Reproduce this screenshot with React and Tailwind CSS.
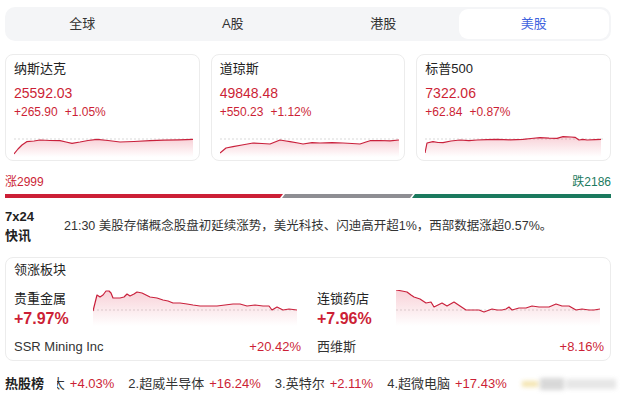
const tabs = ['全球', 'A股', '港股', '美股']

const indices = [
  {
    name: '纳斯达克',
    price: '25592.03',
    change: '+265.90',
    pct: '+1.05%',
    points: [[0, 19], [4, 14], [8, 10], [12.7, 6.7], [20, 6], [26, 5], [36, 5.5], [46, 5.7], [52, 7], [58, 8.3], [66, 7], [74, 5.5], [83, 4.3], [94, 5.5], [106, 7], [120, 6.5], [136, 5.7], [150, 5.2], [165, 4.8], [179, 4.3]],
  },
  {
    name: '道琼斯',
    price: '49848.48',
    change: '+550.23',
    pct: '+1.12%',
    points: [[0, 18], [6, 13], [13, 11.7], [22, 10], [33, 8], [42, 8.5], [50, 9], [55, 7], [60, 5], [66, 6], [70, 6.7], [78, 8], [83, 9], [92, 7.7], [100, 8], [112, 7.6], [123, 8], [132, 8.5], [140, 9], [146, 7], [150, 5.7], [160, 5.5], [170, 5.8], [179, 5]],
  },
  {
    name: '标普500',
    price: '7322.06',
    change: '+62.84',
    pct: '+0.87%',
    points: [[0, 18], [2, 8], [8, 6.7], [13, 7.5], [18, 7.7], [26, 6], [35, 5], [44, 5.6], [52, 5], [62, 4.6], [72, 4.3], [85, 4.8], [98, 4.3], [106, 3.5], [115, 2.7], [124, 3.2], [132, 3.3], [138, 1.7], [146, 2], [150, 2.3], [154, 5], [158, 4.4], [162, 5], [170, 4.6], [176, 4.3]],
  },
]

const sectors = [
  {
    name: '贵重金属',
    pct: '+7.97%',
    stock: 'SSR Mining Inc',
    stockPct: '+20.42%',
    points: [[0, 21], [4, 5], [7, 7], [10, 5], [13, 1], [16, 1], [18, 3], [20, 8], [27, 8], [31, 7], [34, 4], [37, 6], [41, 4], [44, 2], [49, 3], [57, 7], [64, 8], [70, 10], [75, 11], [80, 13], [87, 13], [94, 14], [100, 15], [107, 16], [115, 16], [124, 16], [132, 15], [140, 14], [147, 14], [154, 16], [162, 15], [170, 16], [176, 16], [179, 20], [184, 17], [190, 20], [196, 19], [204, 20]],
  },
  {
    name: '连锁药店',
    pct: '+7.96%',
    stock: '西维斯',
    stockPct: '+8.16%',
    points: [[0, 0], [6, 1], [11, 2], [15, 5], [18, 7], [24, 9], [30, 13], [35, 12], [38, 17], [42, 15], [46, 13], [51, 16], [58, 12], [64, 16], [70, 20], [76, 20], [83, 20], [88, 22], [96, 19], [101, 20], [106, 20], [110, 19], [113, 17], [116, 20], [123, 18], [130, 18], [136, 16], [143, 17], [153, 17], [160, 14], [166, 16], [173, 16], [180, 20], [186, 19], [193, 20], [198, 20], [204, 19]],
  },
]

const hotStocks = [
  { name: '2.超威半导体', pct: '+16.24%' },
  { name: '3.英特尔', pct: '+2.11%' },
  { name: '4.超微电脑', pct: '+17.43%' },
]

function Spark({ id, points, w, h, base }) {
  const line = points.map((p, i) => `${i ? 'L' : 'M'}${p[0]} ${p[1]}`).join(' ')
  const last = points[points.length - 1]
  const area = `${line} L${last[0]} ${h} L${points[0][0]} ${h} Z`
  return (
    <svg width={w} height={h} viewBox={`0 0 ${w} ${h}`} className="block">
      <defs>
        <linearGradient id={id} x1="0" y1="0" x2="0" y2="1">
          <stop offset="0%" stopColor="#e0304c" stopOpacity="0.22" />
          <stop offset="100%" stopColor="#e0304c" stopOpacity="0" />
        </linearGradient>
      </defs>
      <line x1="0" y1={base} x2={w} y2={base} stroke="#d9d9d9" strokeWidth="1" strokeDasharray="2 2" />
      <path d={area} fill={`url(#${id})`} />
      <path d={line} fill="none" stroke="#c9213c" strokeWidth="1.2" strokeLinejoin="round" />
    </svg>
  )
}

export default function App() {
  return (
    <div className="h-[401px] w-[629px] overflow-hidden bg-white pl-[5px] pt-[7px] font-['Liberation_Sans','Noto_Sans_CJK_SC',sans-serif] text-[#222]">
      <div className="w-[606px]">
        {/* market tabs */}
        <div className="grid h-[34px] grid-cols-4 rounded-[10px] bg-[#f4f5f7] p-[2px]">
          {tabs.map((t) => (
            <div
              key={t}
              className={
                t === '美股'
                  ? 'flex items-center justify-center rounded-[9px] bg-white text-[13px] text-[#3f63de]'
                  : 'flex items-center justify-center text-[13px] text-[#333]'
              }
            >
              {t}
            </div>
          ))}
        </div>

        {/* index cards */}
        <div className="mt-[13px] grid grid-cols-3 gap-[11px]">
          {indices.map((c, i) => (
            <div key={c.name} className="h-[107px] rounded-[8px] border border-[#ececec] px-[8px] pt-[5px]">
              <div className="text-[13px] leading-[18px] text-[#222]">{c.name}</div>
              <div className="mt-[6px] text-[14px] leading-[18px] text-[#cc1f36]">{c.price}</div>
              <div className="mt-[2px] flex gap-[7px] text-[12px] leading-[16px] text-[#cc1f36]">
                <span>{c.change}</span>
                <span>{c.pct}</span>
              </div>
              <div className="mt-[15px]">
                <Spark id={`idx${i}`} points={c.points} w={179} h={22} base={4} />
              </div>
            </div>
          ))}
        </div>

        {/* up / down */}
        <div className="mt-[13px] flex justify-between text-[12px] leading-[16px]">
          <span className="text-[#cc1f36]">涨2999</span>
          <span className="text-[#1b7a5e]">跌2186</span>
        </div>
        <div className="mt-[4px] flex h-[4px]">
          <div className="w-[278px] bg-[#cc1f36] [clip-path:polygon(0_0,100%_0,calc(100%-3px)_100%,0_100%)]" />
          <div className="ml-[-1px] w-[131px] bg-[#8e8e93] [clip-path:polygon(3px_0,100%_0,calc(100%-3px)_100%,0_100%)]" />
          <div className="ml-[-1px] flex-1 bg-[#1b7a5e] [clip-path:polygon(3px_0,100%_0,100%_100%,0_100%)]" />
        </div>

        {/* 7x24 news */}
        <div className="mt-[9px] flex items-center">
          <div className="w-[59px] text-[13px] font-bold leading-[19px] text-[#222]">
            <div>7x24</div>
            <div>快讯</div>
          </div>
          <div className="text-[12.5px] text-[#333]">
            21:30 美股存储概念股盘初延续涨势，美光科技、闪迪高开超1%，西部数据涨超0.57%。
          </div>
        </div>

        {/* leading sectors */}
        <div className="mt-[12px] h-[104px] rounded-[8px] border border-[#ececec] pl-[8px] pr-[6px] pt-[3px]">
          <div className="text-[13px] leading-[18px] text-[#222]">领涨板块</div>
          <div className="grid grid-cols-2 gap-[16px]">
            {sectors.map((s, i) => (
              <div key={s.name}>
                <div className="flex">
                  <div className="w-[79px] pt-[11px]">
                    <div className="text-[13px] leading-[18px] text-[#222]">{s.name}</div>
                    <div className="text-[16px] font-semibold leading-[22px] text-[#cc1f36]">{s.pct}</div>
                  </div>
                  <div className="mt-[11px]">
                    <Spark id={`sec${i}`} points={s.points} w={204} h={36} base={20} />
                  </div>
                </div>
                <div className="mt-[8px] flex justify-between text-[13px] leading-[18px]">
                  <span className="text-[#333]">{s.stock}</span>
                  <span className="text-[#cc1f36]">{s.stockPct}</span>
                </div>
              </div>
            ))}
          </div>
        </div>

        {/* hot stocks */}
        <div className="relative mt-[13px] flex h-[20px] items-center text-[13px] leading-[20px]">
          <span className="w-[52px] shrink-0 font-bold text-[#222]">热股榜</span>
          <div className="w-[460px] overflow-hidden">
            <div className="ml-[-16px] flex gap-[14px] whitespace-nowrap">
              <span className="flex gap-[5px]">
                <span className="text-[#333]">1.太</span>
                <span className="text-[#cc1f36]">+4.03%</span>
              </span>
              {hotStocks.map((h) => (
                <span key={h.name} className="flex gap-[5px]">
                  <span className="text-[#333]">{h.name}</span>
                  <span className="text-[#cc1f36]">{h.pct}</span>
                </span>
              ))}
            </div>
          </div>
          <div className="absolute left-[517px] top-[3px] flex h-[14px] w-[100px] items-center gap-[2px] opacity-70 blur-[2px]">
            <div className="h-[6px] w-[16px] bg-[#efd98f]" />
            <div className="h-[12px] w-[24px] bg-[#c8c8c8]" />
            <div className="h-[10px] w-[50px] bg-[#dcdcdc]" />
          </div>
        </div>
      </div>
    </div>
  )
}
